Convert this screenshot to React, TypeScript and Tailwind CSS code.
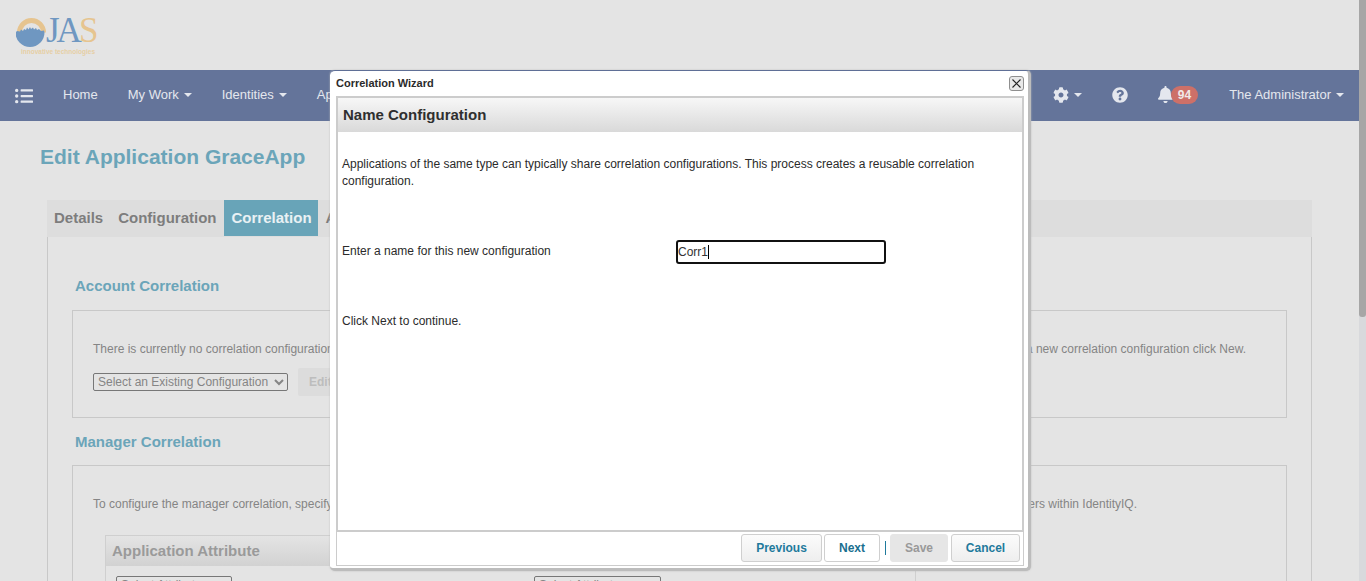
import { FaBell, FaCog, FaListUl, FaQuestionCircle } from "react-icons/fa";

const Caret = () => (
  <span className="ml-[5px] inline-block h-0 w-0 border-x-[4px] border-t-[4px] border-x-transparent border-t-[#e4e7ee] align-middle" />
);

function Logo() {
  return (
    <div className="flex w-[84px] flex-col">
      <div className="flex h-[30px] items-start">
        <svg width="31" height="31" viewBox="0 0 31 31" className="shrink-0">
          <path d="M1 15.500a14.500 14.500 0 0 1 29 0h-5a9.500 9.500 0 0 0-19 0z" fill="#e6c48f" />
          <path
            d="M1 14l3 .5 1-2 2 1.500 1-2 2 1 1-2.500 1.500 2 1.500-2.500 1 2 2-1.500 1 2 2-1.500 1 2 2-1 2 2 3-.5.500 2a14.500 14.500 0 0 1-29 0z"
            fill="#6f97c1"
          />
        </svg>
        <span className="ml-[-1px] h-[30px] font-['Liberation_Serif',serif] text-[35px] leading-[28px] tracking-[-3px] text-[#6f97c1]">
          JA<span className="text-[#e6c48f]">S</span>
        </span>
      </div>
      <span className="mt-[1px] whitespace-nowrap pl-[5px] text-[6.500px] font-bold leading-[7px] text-[#e6cfa5]">
        innovative technologies
      </span>
    </div>
  );
}

function NavBar() {
  return (
    <nav className="flex h-[51px] shrink-0 items-center bg-[#64749a] pb-[2px] text-[13px] text-[#e4e7ee]">
      <FaListUl className="ml-[15px] mr-[15px] mt-[2px] text-[18px]" />
      <a className="px-[15px]">Home</a>
      <a className="px-[15px]">
        My Work
        <Caret />
      </a>
      <a className="px-[15px]">
        Identities
        <Caret />
      </a>
      <a className="px-[15px]">Applications</a>
      <div className="ml-auto flex items-center">
        <span className="flex items-center">
          <FaCog className="text-[16px]" />
          <Caret />
        </span>
        <FaQuestionCircle className="ml-[30px] text-[16px]" />
        <span className="ml-[29px] flex items-center">
          <FaBell className="text-[17px]" />
          <span className="ml-[-3px] rounded-full bg-[#cd7068] px-[7px] py-[1px] text-[12px] font-bold leading-[16px] text-[#f1e9e8]">
            94
          </span>
        </span>
        <span className="ml-[31px] mr-[15px]">
          The Administrator
          <Caret />
        </span>
      </div>
    </nav>
  );
}

function Page() {
  return (
    <div className="flex h-[581px] min-w-0 flex-1 flex-col overflow-hidden bg-[#e4e4e4]">
      <header className="h-[70px] shrink-0 pl-[16px] pt-[17px]">
        <Logo />
      </header>
      <NavBar />
      <main className="pl-[40px] pr-[47px]">
        <h1 className="mt-[24px] text-[21px] font-bold leading-[24px] text-[#6ba5b9]">Edit Application GraceApp</h1>
        <div className="ml-[7px] mt-[31px]">
          <div className="flex h-[37px] items-start bg-[#dddddd] text-[15px] font-bold leading-[36px] text-[#7d7d7d]">
            <span className="px-[7px]">Details</span>
            <span className="pl-[8px] pr-[7px]">Configuration</span>
            <span className="h-[36px] bg-[#68a4b8] pl-[8px] pr-[6px] text-[#e9f1f4]">Correlation</span>
            <span className="px-[8px]">Attributes</span>
          </div>
          <div className="border-x border-[#c8c8c8] px-[24px] pb-[20px] pt-[40px]">
            <h2 className="pl-[3px] text-[15px] font-bold leading-[18px] text-[#6ba5b9]">Account Correlation</h2>
            <section className="mt-[15px] h-[108px] border border-[#c8c8c8] px-[20px] pt-[30px] text-[12px] text-[#858585]">
              <p className="flex justify-between pr-[20px] leading-[16px]">
                <span>There is currently no correlation configuration</span>
                <span>a new correlation configuration click New.</span>
              </p>
              <div className="mt-[11px] flex items-center">
                <select className="h-[18px] w-[195px] rounded-[2px] border border-[#777777] text-[12px] text-[#858585]">
                  <option>Select an Existing Configuration</option>
                </select>
                <button className="ml-[10px] h-[28px] rounded-[2px] bg-[#dcdcdc] px-[11px] text-[12px] font-bold text-[#bdbdbd]">
                  Edit
                </button>
              </div>
            </section>
            <h2 className="mt-[15px] pl-[3px] text-[15px] font-bold leading-[18px] text-[#6ba5b9]">Manager Correlation</h2>
            <section className="mt-[14px] h-[200px] border border-[#c8c8c8] px-[20px] pt-[30px] text-[12px] text-[#858585]">
              <p className="flex justify-between pr-[129px] leading-[16px]">
                <span>To configure the manager correlation, specify</span>
                <span>ers within IdentityIQ.</span>
              </p>
              <div className="ml-[12px] mt-[23px] w-[811px] border border-[#cfcfcf]">
                <div className="h-[30px] bg-gradient-to-b from-[#e4e4e4] to-[#d2d2d2] pl-[6px] text-[15px] font-bold leading-[30px] text-[#9a9a9a]">
                  Application Attribute
                </div>
                <div className="flex pl-[10px] pt-[10px]">
                  <select className="h-[18px] w-[116px] rounded-[2px] border border-[#777777] text-[12px] text-[#858585]">
                    <option>Select Attribute</option>
                  </select>
                  <select className="ml-[302px] h-[18px] w-[127px] rounded-[2px] border border-[#777777] text-[12px] text-[#858585]">
                    <option>Select Attribute</option>
                  </select>
                </div>
              </div>
            </section>
          </div>
        </div>
      </main>
    </div>
  );
}

function WizardButton({ label, className }: { label: string; className: string }) {
  return (
    <button className={`h-[28px] rounded-[3px] border text-[12px] font-bold ${className}`}>{label}</button>
  );
}

function Wizard() {
  return (
    <div className="absolute left-[330px] top-[70px] flex h-[501px] w-[701px] flex-col rounded-[5px] border-b-[3px] border-r-[3px] border-t border-[#bcbcbc] border-t-[#5f6f96] bg-white shadow-[0_0_2px_#bbbbbb]">
      <div className="flex h-[25px] shrink-0 items-center justify-between pl-[6px] pr-[4px]">
        <span className="text-[11px] font-bold text-[#2b2b2b]">Correlation Wizard</span>
        <button className="flex h-[15px] w-[15px] items-center justify-center rounded-[3px] border border-[#8f8f8f] bg-[#e8e8e8]">
          <svg width="9" height="9" viewBox="0 0 9 9">
            <path d="M.5.5l8 8M8.500.5l-8 8" stroke="#222222" strokeWidth="1.100" fill="none" />
          </svg>
        </button>
      </div>
      <div className="ml-[6px] mr-[4px] flex h-[436px] shrink-0 flex-col border-2 border-[#cccccc]">
        <div className="h-[34px] shrink-0 bg-gradient-to-b from-[#f7f7f7] to-[#d9d9d9] pl-[5px] text-[15px] font-bold leading-[34px] text-[#2f2f2f]">
          Name Configuration
        </div>
        <div className="flex-1 pl-[4px] pr-[3px] pt-[24px] text-[12px] leading-[17px] text-[#2b2b2b]">
          <p className="w-[670px]">
            Applications of the same type can typically share correlation configurations. This process creates a reusable
            correlation configuration.
          </p>
          <div className="mt-[48px] flex items-center">
            <span className="w-[334px]">Enter a name for this new configuration</span>
            <div className="mt-[2px] flex h-[24px] w-[210px] items-center rounded-[3px] border-2 border-[#111111] text-[#333333]">
              Corr1
              <span className="h-[14px] w-px bg-black" />
            </div>
          </div>
          <p className="mt-[49px]">Click Next to continue.</p>
        </div>
      </div>
      <div className="ml-[6px] mr-[4px] flex h-[34px] shrink-0 items-center justify-end border-x border-b border-[#cccccc] pb-[2px] pr-[3px]">
        <WizardButton label="Previous" className="w-[81px] border-[#cfcfcf] bg-gradient-to-b from-[#fbfbfb] to-[#eeeeee] text-[#1f7a9c]" />
        <WizardButton label="Next" className="ml-[2px] w-[56px] border-[#cfcfcf] bg-white text-[#1a6f8f]" />
        <span className="ml-[5px] h-[14px] w-px bg-[#1f7a9c]" />
        <WizardButton label="Save" className="ml-[4px] w-[58px] border-[#e6e6e6] bg-[#e6e6e6] text-[#999999]" />
        <WizardButton label="Cancel" className="ml-[3px] w-[69px] border-[#cfcfcf] bg-gradient-to-b from-[#fbfbfb] to-[#eeeeee] text-[#1f7a9c]" />
      </div>
    </div>
  );
}

export default function App() {
  return (
    <div className="relative flex h-[581px] overflow-hidden font-['Liberation_Sans',Arial,sans-serif]">
      <Page />
      {/* scrollbar */}
      <div className="w-[7px] shrink-0 bg-[#d8d9dc]">
        <div className="h-[317px] rounded-b-[3px] bg-[#a6a6a6]" />
      </div>
      <Wizard />
    </div>
  );
}
